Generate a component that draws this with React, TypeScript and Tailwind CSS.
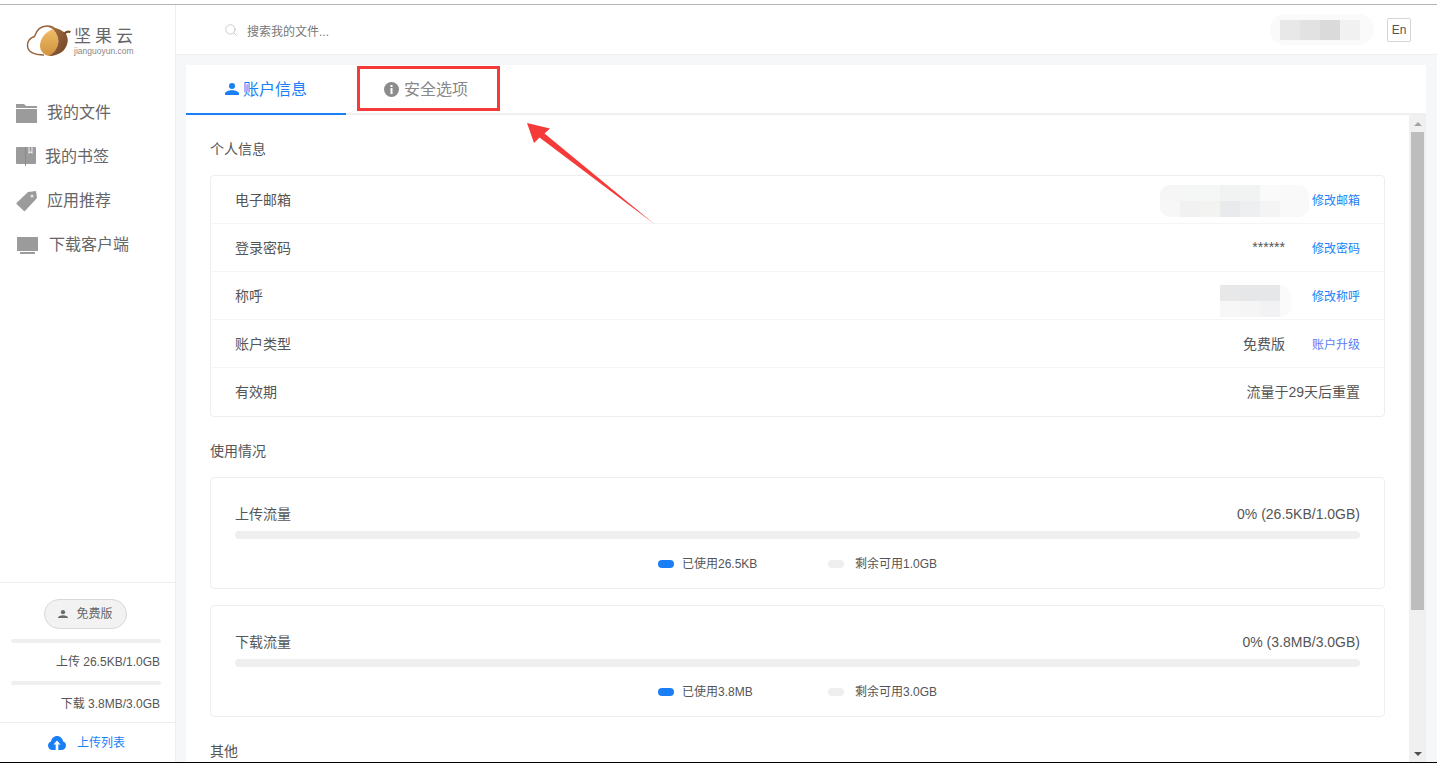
import { Search } from "lucide-react";

const font = { fontFamily: '"Liberation Sans", "Noto Sans CJK SC", sans-serif' };

function Mosaic({ rows, cell, h, className }: { rows: string[][]; cell: number; h: number; className?: string }) {
  return (
    <div className={className}>
      {rows.map((row, i) => (
        <div key={i} className="flex">
          {row.map((c, j) => (
            <div key={j} style={{ width: cell, height: h, background: c }} />
          ))}
        </div>
      ))}
    </div>
  );
}

function PersonIcon({ size, color }: { size: number; color: string }) {
  return (
    <svg width={size} height={size * 0.86} viewBox="0 0 14 12" fill={color}>
      <circle cx="7" cy="3" r="3" />
      <path d="M0 12V10.500C0 8.500 3.500 7.200 7 7.200C10.500 7.200 14 8.500 14 10.500V12Z" />
    </svg>
  );
}

function Logo() {
  return (
    <div className="flex items-start">
      <svg width="46" height="32" viewBox="0 0 46 32">
        <defs>
          <linearGradient id="nut" x1="0" y1="0" x2="0" y2="1">
            <stop offset="0" stopColor="#f0bd66" />
            <stop offset="1" stopColor="#d0923f" />
          </linearGradient>
          <linearGradient id="cap" x1="0" y1="0" x2="1" y2="1">
            <stop offset="0" stopColor="#a87040" />
            <stop offset="1" stopColor="#6f4526" />
          </linearGradient>
        </defs>
        <path d="M18 30C8 30 1.500 27 1.500 20.500C1.500 15.500 5 12.500 8.500 11.500C10.500 5 15 1 21 1C25 1 28 2.500 30 5" fill="#fff" stroke="#96603a" strokeWidth="1.400" />
        <path d="M27 4C19 7 14 14 14 21C14 26 18 30 23 31C33 26 36 14 27 4Z" fill="url(#nut)" />
        <path d="M22 2C30 2 36 5 40 9C43 14 42 20 38 25C34 29 28 31 23 31C33 25 36 14 27 4Z" fill="url(#cap)" />
        <path d="M38 9C39.500 7 42 6 44.500 7" stroke="#7c4d2a" strokeWidth="2.200" fill="none" />
      </svg>
      <div className="ml-[2px] mt-[1px] flex flex-col">
        <span className="text-[17px] leading-[21px] tracking-[4px] text-[#666] whitespace-nowrap">坚果云</span>
        <span className="text-[8.5px] leading-[8px] text-[#888] whitespace-nowrap">jianguoyun.com</span>
      </div>
    </div>
  );
}

function NavIcon({ kind }: { kind: string }) {
  if (kind === "folder")
    return (
      <svg width="21" height="19" viewBox="0 0 21 19" fill="#9b9b9b">
        <path d="M0 0h8l2 2h11v2H0zM0 5h21v14H0z" />
      </svg>
    );
  if (kind === "book")
    return (
      <svg width="20" height="20" viewBox="0 0 20 20" fill="#9b9b9b">
        <path d="M1 0h18a1 1 0 0 1 1 1v15a1 1 0 0 1-1 1H1a1 1 0 0 1-1-1V1a1 1 0 0 1 1-1Z" />
        <path d="M9 0h1v19H9z" fill="#8a8a8a" />
        <path d="M12.500 0h4v7l-2-1.500-2 1.500z" fill="#eeeeee" />
        <path d="M13.500 0h2v5l-1-.7-1 .7z" fill="#9b9b9b" />
      </svg>
    );
  if (kind === "tag")
    return (
      <svg width="21" height="21" viewBox="0 0 21 21" fill="#9b9b9b">
        <path d="M12 1l8-1 1 7-12 13a1 1 0 0 1-1 0L0.500 13a1 1 0 0 1 0-1z" />
        <circle cx="16" cy="5" r="1.500" fill="#e4e4e4" />
      </svg>
    );
  return (
    <svg width="23" height="17" viewBox="0 0 23 17" fill="#9b9b9b">
      <path d="M1 0h21v14H1zM4 15h15v2H4z" />
    </svg>
  );
}

const nav = [
  { icon: "folder", label: "我的文件", gap: "gap-[10px]" },
  { icon: "book", label: "我的书签", gap: "gap-[9px]" },
  { icon: "tag", label: "应用推荐", gap: "gap-[10px]" },
  { icon: "screen", label: "下载客户端", gap: "gap-[10px]" },
];

function Sidebar() {
  return (
    <aside className="w-[176px] shrink-0 flex flex-col bg-white border-r border-[#eeeeee]">
      <div className="pl-[26px] pt-[20px] h-[86px]">
        <Logo />
      </div>
      <nav className="flex flex-col">
        {nav.map((n) => (
          <div key={n.label} className={`h-[44px] pl-[16px] flex items-center text-[16px] text-[#666] ${n.gap}`}>
            <NavIcon kind={n.icon} />
            <span>{n.label}</span>
          </div>
        ))}
      </nav>
      <div className="mt-auto border-t border-[#eeeeee] h-[140px] px-[11px] pt-[16px] flex flex-col">
        <div className="self-start ml-[33px] w-[83px] h-[30px] rounded-full bg-[#f2f2f2] border border-[#d8d8d8] flex items-center justify-center gap-[8px] text-[12px] text-[#666]">
          <PersonIcon size={10} color="#6a6a6a" />
          <span>免费版</span>
        </div>
        <div className="mt-[10px] h-[4px] w-[150px] rounded-full bg-[#efefef]" />
        <div className="mt-[10px] h-[18px] leading-[18px] w-[149px] text-right text-[12px] text-[#555]">上传 26.5KB/1.0GB</div>
        <div className="mt-[10px] h-[4px] w-[150px] rounded-full bg-[#efefef]" />
        <div className="mt-[10px] h-[18px] leading-[18px] w-[149px] text-right text-[12px] text-[#555]">下载 3.8MB/3.0GB</div>
      </div>
      <div className="h-[40px] border-t border-[#eeeeee] flex items-center pl-[48px] gap-[11px] text-[12px] text-[#1a7ff5]">
        <svg width="18" height="14" viewBox="0 0 18 14">
          <path d="M4.500 14C2 14 0 12 0 9.500C0 7.500 1.300 6 3 5.400C3.500 2.300 6 0 9 0C12 0 14.500 2.200 15 5.200C16.800 5.800 18 7.500 18 9.500C18 12 16 14 13.500 14Z" fill="#1a7ff5" />
          <path d="M9 4.500L12.500 8.500H10.300V14H7.700V8.500H5.500Z" fill="#fff" />
        </svg>
        <span>上传列表</span>
      </div>
    </aside>
  );
}

function Header() {
  return (
    <header className="h-[50px] shrink-0 bg-white border-b border-[#eeeeee] flex items-center pl-[48px] pr-[26px]">
      <div className="flex items-center mt-[5px]">
        <Search size={14} color="#c4c4c4" strokeWidth={1.500} className="-mt-[5px]" />
        <span className="ml-[9px] text-[12px] text-[#777]">搜索我的文件...</span>
      </div>
      <div className="ml-auto w-[104px] h-[31px] rounded-full bg-[#fafafa] flex items-center pl-[10px] mr-[13px]">
        <Mosaic rows={[["#e8e8e8", "#e2e2e2", "#dadada", "#f1f1f1"]]} cell={20} h={20} />
      </div>
      <div className="w-[24px] h-[24px] border border-[#d5d5d5] rounded-[2px] flex items-center justify-center text-[12px] text-[#555]">En</div>
    </header>
  );
}

function Row({ label, value, action, actionClass, last }: { label: string; value?: React.ReactNode; action?: string; actionClass?: string; last?: boolean }) {
  return (
    <div className={`h-[48px] px-[24px] flex items-center text-[14px] text-[#555] ${last ? "" : "pt-[1px] border-b border-[#f5f5f5]"}`}>
      <span>{label}</span>
      <div className="ml-auto flex items-center">{value}</div>
      {action && <span className={`w-[48px] ml-[27px] mt-[2px] text-[12px] ${actionClass ?? "text-[#1a7ff5]"}`}>{action}</span>}
    </div>
  );
}

function Traffic({ title, stat, used, left, className }: { title: string; stat: string; used: string; left: string; className?: string }) {
  return (
    <section className={`h-[112px] rounded-[4px] border border-[#eeeeee] px-[24px] pt-[27px] ${className ?? ""}`}>
      <div className="flex justify-between h-[18px] leading-[18px] text-[14px] text-[#555]">
        <span>{title}</span>
        <span>{stat}</span>
      </div>
      <div className="mt-[8px] h-[8px] rounded-full bg-[#efefef]" />
      <div className="mt-[17px] ml-[423px] flex items-center text-[12px] text-[#555] h-[16px]">
        <span className="w-[16px] h-[8px] rounded-full bg-[#1a7ff5]" />
        <span className="ml-[8px] w-[146px]">{used}</span>
        <span className="w-[16px] h-[8px] rounded-full bg-[#efefef]" />
        <span className="ml-[11px]">{left}</span>
      </div>
    </section>
  );
}

function Panel() {
  return (
    <div className="flex-1 min-h-0 flex bg-white">
      <div className="w-[1223px] shrink-0 px-[24px] overflow-hidden">
        <h3 className="mt-[24px] h-[20px] leading-[20px] text-[14px] font-normal text-[#555]">个人信息</h3>
        <div className="mt-[16px] w-[1175px] rounded-[4px] border border-[#eeeeee]">
          <Row
            label="电子邮箱"
            value={
              <div className="w-[149px] h-[32px] mt-[2px] rounded-[10px] bg-[#f9f9fa] flex items-center mr-[-24px] overflow-hidden">
                <Mosaic rows={[["#f6f6f6", "#f5f6f6", "#f5f7f7", "#f1f2f2", "#f1f3f3", "#fafafa"], ["#f7f7f7", "#f1f1f1", "#f3f3f2", "#e9eaec", "#eeeff0", "#f4f4f4"]]} cell={20} h={16} />
              </div>
            }
            action="修改邮箱"
          />
          <Row label="登录密码" value={<span className="-mt-[2px]">******</span>} action="修改密码" />
          <Row
            label="称呼"
            value={
              <div className="w-[71px] mt-[10px] rounded-r-[10px] bg-[#fafafa] mr-[-6px]">
                <Mosaic rows={[["#e8e8e8", "#e6e7e8", "#e6e7e8"], ["#f7f7f7", "#f5f5f6", "#f2f2f4"]]} cell={20} h={16} />
              </div>
            }
            action="修改称呼"
          />
          <Row label="账户类型" value={<span>免费版</span>} action="账户升级" actionClass="text-[#5a7df5]" />
          <Row label="有效期" value={<span>流量于29天后重置</span>} last />
        </div>
        <h3 className="mt-[24px] h-[20px] leading-[20px] text-[14px] font-normal text-[#555]">使用情况</h3>
        <div className="w-[1175px]">
          <Traffic className="mt-[16px]" title="上传流量" stat="0% (26.5KB/1.0GB)" used="已使用26.5KB" left="剩余可用1.0GB" />
          <Traffic className="mt-[16px]" title="下载流量" stat="0% (3.8MB/3.0GB)" used="已使用3.8MB" left="剩余可用3.0GB" />
        </div>
        <h3 className="mt-[24px] h-[20px] leading-[20px] text-[14px] font-normal text-[#555]">其他</h3>
      </div>
      <div className="w-[17px] shrink-0 bg-[#f0f0f0] flex flex-col items-center">
        <div className="h-[17px] flex items-center justify-center">
          <div className="w-0 h-0 border-x-[4px] border-x-transparent border-b-[4px] border-b-[#a3a3a3]" />
        </div>
        <div className="w-[13px] h-[478px] bg-[#bdbdbd]" />
        <div className="mt-auto h-[17px] flex items-center justify-center">
          <div className="w-0 h-0 border-x-[4px] border-x-transparent border-t-[4px] border-t-[#505050]" />
        </div>
      </div>
    </div>
  );
}

export default function App() {
  return (
    <div className="relative h-[763px] w-[1437px] overflow-hidden flex flex-col bg-white" style={font}>
      <div className="h-[5px] shrink-0 border-b border-[#b4b4b4]" />
      <div className="flex-1 min-h-0 flex">
        <Sidebar />
        <main className="flex-1 min-w-0 flex flex-col bg-[#f6f7f9]">
          <Header />
          <div className="flex-1 min-h-0 flex flex-col ml-[10px] mr-[11px] mt-[10px]">
            <div className="h-[50px] shrink-0 flex bg-white border-b-[2px] border-[#f0f0f0]">
              <div className="w-[160px] h-[50px] border-b-[2px] border-[#1a7ff5] flex items-center justify-center gap-[4px] text-[16px] text-[#1a7ff5]">
                <PersonIcon size={14} color="#1a7ff5" />
                <span className="mt-[2px]">账户信息</span>
              </div>
              <div className="ml-[22px] pl-[16px] flex items-center gap-[5px] text-[16px] text-[#888]">
                <svg width="15" height="15" viewBox="0 0 15 15">
                  <circle cx="7.500" cy="7.500" r="7.500" fill="#8c8c8c" />
                  <rect x="6.500" y="3" width="2" height="2" fill="#fff" />
                  <rect x="6.500" y="6" width="2" height="6" fill="#fff" />
                </svg>
                <span className="mt-[2px]">安全选项</span>
              </div>
            </div>
            <Panel />
          </div>
        </main>
      </div>
      <div className="h-[1px] shrink-0 bg-black" />
      {/* red annotation over the screenshot */}
      <div className="absolute left-[357px] top-[66px] w-[143px] h-[45px] border-[3px] border-[#f53a3a]" />
      <svg className="absolute left-[520px] top-[118px]" width="140" height="110" viewBox="0 0 140 110">
        <path d="M7 5L30 10.500L24.500 15.500L135 106.500L19.500 19.500L14 25Z" fill="#f53a3a" />
      </svg>
    </div>
  );
}
